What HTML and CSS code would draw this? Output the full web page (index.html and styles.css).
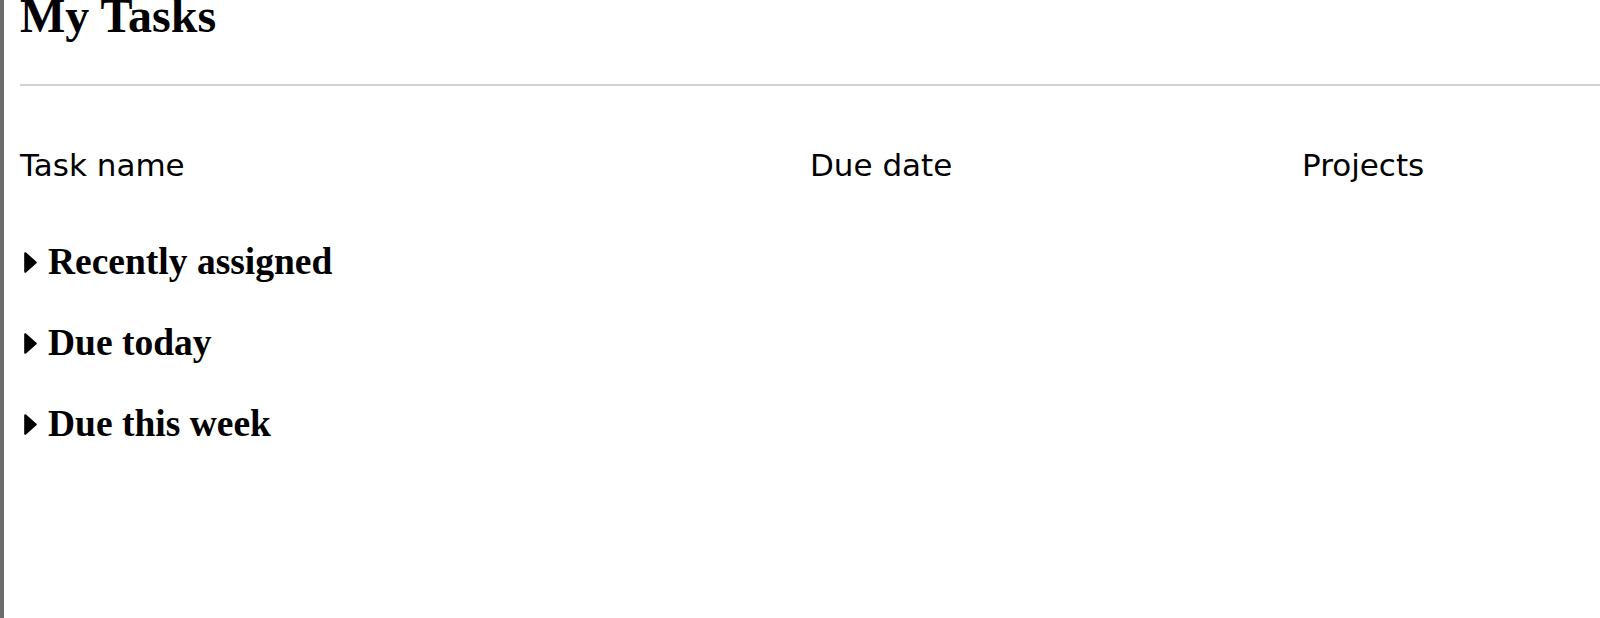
FILE: index.html
```html
<!DOCTYPE html>
<html lang="en">
<head>
<meta charset="utf-8">
<title>My Tasks</title>
<link rel="stylesheet" href="styles.css">
</head>
<body>
<div class="page">
  <div class="sidebar"></div>
  <main class="main">
    <h1 class="title">My Tasks</h1>
    <div class="rule"></div>
    <div class="cols">
      <span class="col">Task name</span>
      <span class="col">Due date</span>
      <span class="col">Projects</span>
    </div>
    <div class="sections">
      <div class="section">
        <svg class="caret" width="13" height="21" viewBox="0 0 13 21"><polygon points="1.3,1.3 11.7,10.5 1.3,19.7" fill="#000" stroke="#000" stroke-width="2.2" stroke-linejoin="round"/></svg>
        <span class="section-title">Recently assigned</span>
      </div>
      <div class="section">
        <svg class="caret" width="13" height="21" viewBox="0 0 13 21"><polygon points="1.3,1.3 11.7,10.5 1.3,19.7" fill="#000" stroke="#000" stroke-width="2.2" stroke-linejoin="round"/></svg>
        <span class="section-title">Due today</span>
      </div>
      <div class="section">
        <svg class="caret" width="13" height="21" viewBox="0 0 13 21"><polygon points="1.3,1.3 11.7,10.5 1.3,19.7" fill="#000" stroke="#000" stroke-width="2.2" stroke-linejoin="round"/></svg>
        <span class="section-title">Due this week</span>
      </div>
    </div>
  </main>
</div>
</body>
</html>
```
FILE: styles.css
```css
html, body {
  margin: 0;
  padding: 0;
  background: #fff;
  height: 100%;
  overflow: hidden;
}

.page {
  display: flex;
  height: 100%;
}

.sidebar {
  width: 4px;
  flex: none;
  background: #6b6b6b;
}

.main {
  flex: 1;
  padding-left: 16px;
  color: #000;
}

.title {
  margin: -8px 0 0;
  font-family: "Liberation Serif", "Times New Roman", serif;
  font-weight: bold;
  font-size: 48px;
  line-height: 48px;
}

.rule {
  height: 2px;
  background: #d3d3d3;
  margin-top: 44px;
}

.cols {
  display: grid;
  grid-template-columns: 790px 492px 1fr;
  margin-top: 61px;
  font-family: "DejaVu Sans", "Liberation Sans", sans-serif;
  font-size: 31px;
  line-height: 36px;
}

.sections {
  display: flex;
  flex-direction: column;
  gap: 39px;
  margin-top: 58px;
}

.section {
  display: flex;
  align-items: center;
  height: 42px;
}

.caret {
  flex: none;
  margin-left: 4px;
  margin-right: 11px;
}

.section-title {
  font-family: "Liberation Serif", "Times New Roman", serif;
  font-weight: bold;
  font-size: 37.5px;
  line-height: 42px;
}
```
